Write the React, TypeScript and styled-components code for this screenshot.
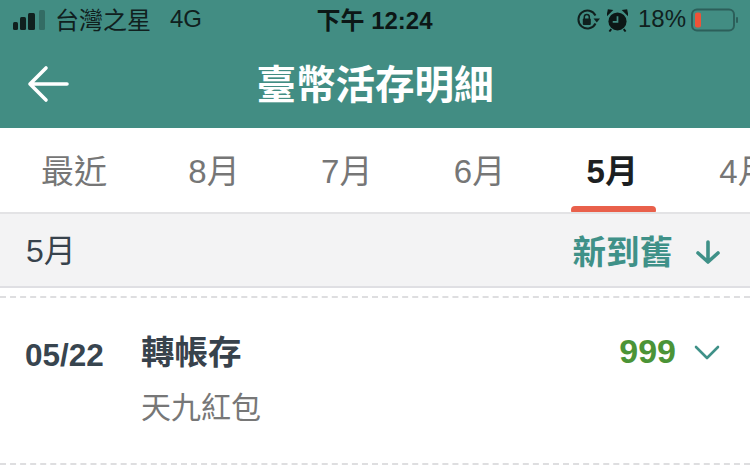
import React from "react"
import styled, { createGlobalStyle } from "styled-components"

const CJK = `"Liberation Sans", "Noto Sans CJK TC", sans-serif`

const GlobalStyle = createGlobalStyle`
  html, body {
    margin: 0;
    padding: 0;
    background: #fff;
  }
  body {
    font-family: ${CJK};
    overflow: hidden;
  }
`

const Page = styled.div`
  width: 750px;
  height: 466px;
  overflow: hidden;
  background: #fff;
`

const TopArea = styled.div`
  height: 128px;
  background: #428d83;
`

const StatusBar = styled.div`
  height: 40px;
  padding: 0 12px 0 13px;
  display: grid;
  grid-template-columns: 1fr auto 1fr;
  align-items: center;
  color: #10201e;
  font-size: 24px;
`

const StatusLeft = styled.div`
  display: flex;
  align-items: center;
`

const StatusText = styled.span<{ $gap: number }>`
  margin-left: ${(p) => p.$gap}px;
  margin-bottom: 3px;
  font-size: 24px;
`

const Clock = styled.span`
  margin: 0 2px 3px 0;
  font-size: 24px;
  font-weight: 700;
  color: #0c1716;
`

const StatusRight = styled.div`
  display: flex;
  align-items: center;
  justify-content: flex-end;
`

const Battery = styled.span`
  margin-left: 5px;
  display: inline-flex;
  align-items: center;
`

const NavBar = styled.div`
  height: 88px;
  position: relative;
  display: flex;
  align-items: center;
  justify-content: center;
`

const BackButton = styled.div`
  position: absolute;
  left: 27px;
  top: 25px;
  display: flex;
`

const Title = styled.h1`
  margin: 0 0 6px;
  font-size: 39.5px;
  font-weight: 700;
  color: #fff;
`

const Tabs = styled.div`
  height: 84px;
  display: flex;
  overflow: hidden;
  border-bottom: 2px solid #e3e3e5;
`

const Tab = styled.div<{ $active?: boolean }>`
  position: relative;
  flex: none;
  padding: 0 40.5px 2px 40.9px;
  display: flex;
  align-items: center;
  height: 82px;
  font-size: 33px;
  font-weight: ${(p) => (p.$active ? 700 : 400)};
  color: ${(p) => (p.$active ? "#1c1f22" : "#767676")};
`

const TabLine = styled.span`
  position: absolute;
  left: 50%;
  bottom: -2px;
  width: 85px;
  height: 8px;
  margin-left: -41px;
  border-radius: 4px;
  background: #e9604b;
`

const SortBar = styled.div`
  height: 72px;
  padding: 0 29px 0 26px;
  display: flex;
  align-items: center;
  justify-content: space-between;
  background: #f3f3f4;
  border-bottom: 2px solid #dfdfe3;
`

const MonthLabel = styled.span`
  margin-bottom: 5px;
  font-size: 32px;
  color: #37424c;
`

const SortButton = styled.div`
  display: flex;
  align-items: center;
  gap: 22px;
  margin-bottom: 2px;
  font-size: 33.5px;
  font-weight: 700;
  color: #3f9188;

  svg {
    margin-top: 5px;
  }
`

const Row = styled.div`
  margin-top: 8px;
  height: 165px;
  padding: 0 30px 0 25px;
  display: flex;
  align-items: flex-start;
  border-top: 2px dashed #dedee0;
  border-bottom: 2px dashed #dedee0;
`

const DateText = styled.span`
  width: 116px;
  flex: none;
  margin-top: 39px;
  font-size: 31.5px;
  font-weight: 700;
  color: #38454f;
`

const Detail = styled.div`
  flex: 1;
  margin-top: 27px;
  display: flex;
  flex-direction: column;
  gap: 9px;
`

const DetailTitle = styled.span`
  font-size: 33.5px;
  font-weight: 700;
  color: #38424c;
`

const DetailNote = styled.span`
  font-size: 30px;
  color: #777;
`

const Amount = styled.div`
  margin-top: 34px;
  display: flex;
  align-items: center;
  gap: 18px;
  font-size: 34px;
  font-weight: 700;
  color: #4b9437;
`

const SignalBars = () => (
  <svg width="33" height="22" viewBox="0 0 33 22">
    <rect x="0" y="13" width="5" height="8" rx="1.5" fill="#10201e" />
    <rect x="7" y="8" width="6" height="13" rx="1.5" fill="#10201e" />
    <rect x="15" y="4" width="7" height="17" rx="1.5" fill="#10201e" />
    <rect x="26" y="1" width="6" height="20" rx="1.5" fill="#10201e" opacity="0.3" />
  </svg>
)

const LockIcon = () => (
  <svg width="24" height="24" viewBox="0 0 24 24" fill="none">
    <path d="M19.5 15.5A9 9 0 1 1 19.5 7.5" stroke="#10201e" strokeWidth="2" />
    <path d="M17.5 10.5h6.5l-3.2 4z" fill="#10201e" />
    <rect x="6.8" y="10.5" width="8" height="6.5" rx="1" fill="#10201e" />
    <path d="M8.3 11V9a2.5 2.5 0 0 1 5 0v2" stroke="#10201e" strokeWidth="1.5" />
  </svg>
)

const AlarmIcon = () => (
  <svg width="21" height="23" viewBox="0 0 22 24" style={{ marginLeft: 7 }}>
    <circle cx="11" cy="13" r="9.5" fill="#0c1716" />
    <path d="M11 7.5V13.5H6" stroke="#428d83" strokeWidth="1.8" fill="none" />
    <path d="M0.5 6L5 1.5 1.5 1z M21.5 6L17 1.5 20.5 1z" fill="#0c1716" stroke="#0c1716" strokeWidth="1.5" />
    <path d="M4.5 21l-2 2.5M17.5 21l2 2.5" stroke="#0c1716" strokeWidth="2" />
  </svg>
)

const BatteryIcon = () => (
  <svg width="47" height="24" viewBox="0 0 47 24">
    <rect x="1" y="1.5" width="42" height="21" rx="5" fill="none" stroke="#2c5f5a" strokeWidth="2" />
    <rect x="4" y="4.5" width="6" height="15" rx="2" fill="#ee5338" />
    <rect x="45" y="9" width="2" height="6" rx="1" fill="#2c5f5a" />
  </svg>
)

const BackArrow = () => (
  <svg width="42" height="38" viewBox="0 0 42 38" fill="none">
    <path
      d="M40 19H3M19 3L3 19l16 16"
      stroke="#fff"
      strokeWidth="3.6"
      strokeLinecap="round"
      strokeLinejoin="round"
    />
  </svg>
)

const SortArrow = () => (
  <svg width="26" height="26" viewBox="0 0 26 26" fill="none">
    <path
      d="M13 3v20M3 14l10 9 10-9"
      stroke="#3f9188"
      strokeWidth="3.6"
      strokeLinecap="round"
      strokeLinejoin="round"
    />
  </svg>
)

const Chevron = () => (
  <svg width="26" height="16" viewBox="0 0 26 16" fill="none">
    <path d="M2 3l11 11L24 3" stroke="#3f9188" strokeWidth="2.6" strokeLinecap="round" strokeLinejoin="round" />
  </svg>
)

const months = ["最近", "8月", "7月", "6月", "5月", "4月"]

const App: React.FC = () => {
  return (
    <Page>
      <GlobalStyle />
      <TopArea>
        <StatusBar>
          <StatusLeft>
            <SignalBars />
            <StatusText $gap={9}>台灣之星</StatusText>
            <StatusText $gap={19}>4G</StatusText>
          </StatusLeft>
          <Clock>下午 12:24</Clock>
          <StatusRight>
            <LockIcon />
            <AlarmIcon />
            <StatusText $gap={10}>18%</StatusText>
            <Battery>
              <BatteryIcon />
            </Battery>
          </StatusRight>
        </StatusBar>
        <NavBar>
          <BackButton>
            <BackArrow />
          </BackButton>
          <Title>臺幣活存明細</Title>
        </NavBar>
      </TopArea>
      <Tabs>
        {months.map((m) => (
          <Tab key={m} $active={m === "5月"}>
            {m}
            {m === "5月" && <TabLine />}
          </Tab>
        ))}
      </Tabs>
      <SortBar>
        <MonthLabel>5月</MonthLabel>
        <SortButton>
          新到舊
          <SortArrow />
        </SortButton>
      </SortBar>
      <Row>
        <DateText>05/22</DateText>
        <Detail>
          <DetailTitle>轉帳存</DetailTitle>
          <DetailNote>天九紅包</DetailNote>
        </Detail>
        <Amount>
          999
          <Chevron />
        </Amount>
      </Row>
    </Page>
  )
}

export default App
